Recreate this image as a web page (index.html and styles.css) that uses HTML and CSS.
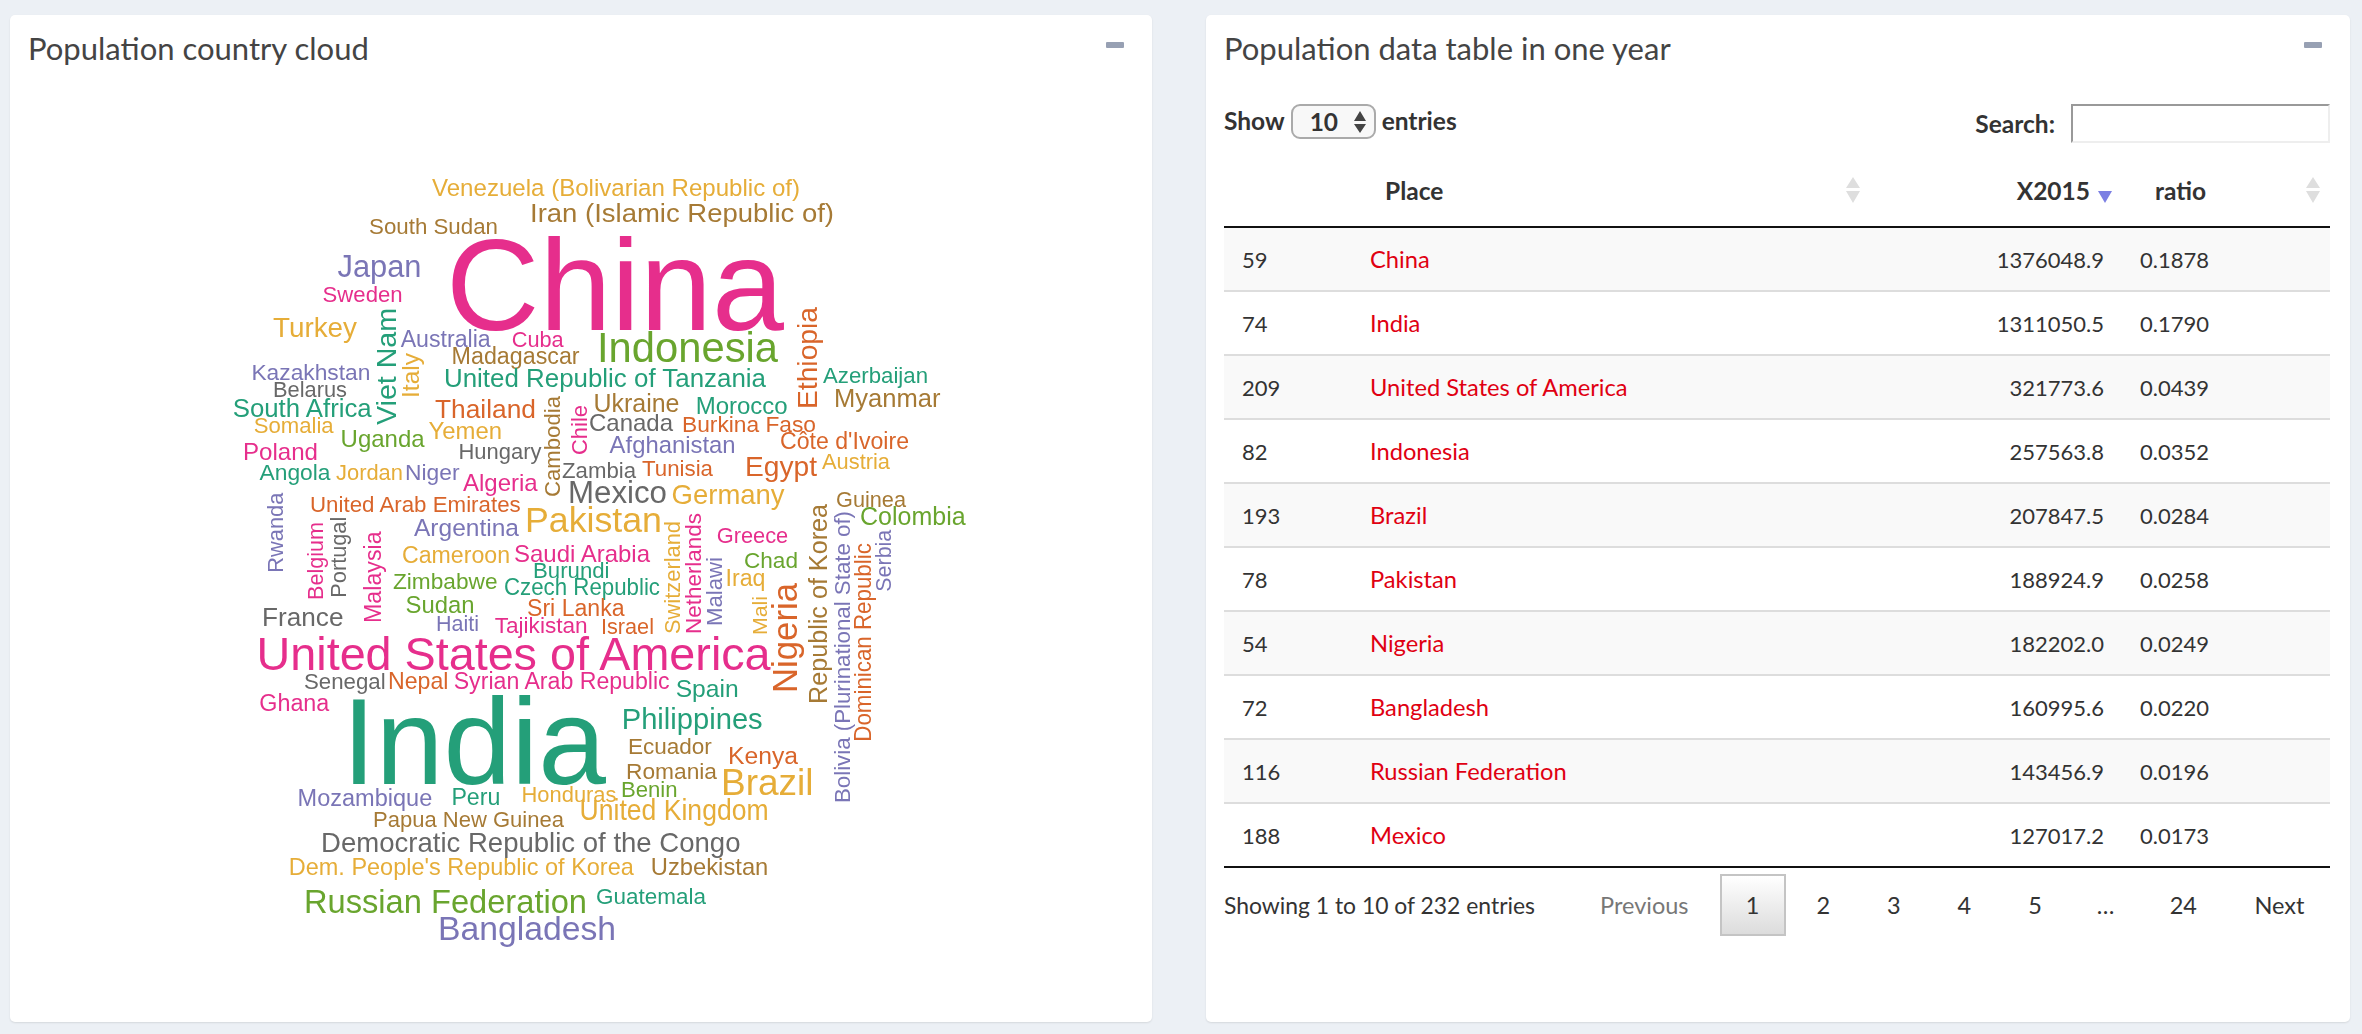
FILE: index.html
```html
<!DOCTYPE html>
<html lang="en">
<head>
  <meta charset="UTF-8">
  <title>Population dashboard</title>
  <link rel="stylesheet" href="styles.css">
</head>
<body>

  <div class="dashboard">

    <section class="box">
      <div class="box-header">
        <h3 class="box-title">Population country cloud</h3>
        <span class="collapse-btn"></span>
      </div>
      <svg class="cloud" viewBox="10 70 1142 900" width="1142" height="900">
        <text class="yellow" x="432" y="196" font-size="23.7" lengthAdjust="spacingAndGlyphs" textLength="368">Venezuela (Bolivarian Republic of)</text>
        <text class="brown" x="530" y="222" font-size="25.6" lengthAdjust="spacingAndGlyphs" textLength="304">Iran (Islamic Republic of)</text>
        <text class="brown" x="369" y="234" font-size="22.3" lengthAdjust="spacingAndGlyphs" textLength="129">South Sudan</text>
        <text class="pink" x="446" y="330" font-size="129.5" lengthAdjust="spacingAndGlyphs" textLength="338">China</text>
        <text class="purple" x="337.5" y="277" font-size="30.8" lengthAdjust="spacingAndGlyphs" textLength="84">Japan</text>
        <text class="pink" x="322.6" y="302" font-size="22" lengthAdjust="spacingAndGlyphs" textLength="80">Sweden</text>
        <text class="yellow" x="273" y="337" font-size="27.5" lengthAdjust="spacingAndGlyphs" textLength="84">Turkey</text>
        <text class="teal" transform="translate(396 425) rotate(-90)" font-size="28.4" lengthAdjust="spacingAndGlyphs" textLength="117">Viet Nam</text>
        <text class="purple" x="400.7" y="347" font-size="23.1" lengthAdjust="spacingAndGlyphs" textLength="90">Australia</text>
        <text class="pink" x="511.7" y="347" font-size="21.8" lengthAdjust="spacingAndGlyphs" textLength="52">Cuba</text>
        <text class="brown" x="451.6" y="364" font-size="23.3" lengthAdjust="spacingAndGlyphs" textLength="128">Madagascar</text>
        <text class="yellow" transform="translate(419 398) rotate(-90)" font-size="24.5" lengthAdjust="spacingAndGlyphs" textLength="45">Italy</text>
        <text class="purple" x="251.4" y="380" font-size="22.8" lengthAdjust="spacingAndGlyphs" textLength="119">Kazakhstan</text>
        <text class="gray" x="273" y="397" font-size="21.8" lengthAdjust="spacingAndGlyphs" textLength="74">Belarus</text>
        <text class="teal" x="444" y="387" font-size="25.6" lengthAdjust="spacingAndGlyphs" textLength="322">United Republic of Tanzania</text>
        <text class="teal" x="232.7" y="417" font-size="25.5" lengthAdjust="spacingAndGlyphs" textLength="139">South Africa</text>
        <text class="yellow" x="253.7" y="433" font-size="22" lengthAdjust="spacingAndGlyphs" textLength="80">Somalia</text>
        <text class="orange" x="435" y="418" font-size="26.3" lengthAdjust="spacingAndGlyphs" textLength="101">Thailand</text>
        <text class="yellow" x="428.6" y="439" font-size="23.2" lengthAdjust="spacingAndGlyphs" textLength="73.5">Yemen</text>
        <text class="lime" x="340.6" y="447" font-size="24" lengthAdjust="spacingAndGlyphs" textLength="84">Uganda</text>
        <text class="pink" x="243" y="460" font-size="24" lengthAdjust="spacingAndGlyphs" textLength="75">Poland</text>
        <text class="gray" x="458.5" y="459" font-size="22" lengthAdjust="spacingAndGlyphs" textLength="83">Hungary</text>
        <text class="brown" transform="translate(559.5 497) rotate(-90)" font-size="22" lengthAdjust="spacingAndGlyphs" textLength="101">Cambodia</text>
        <text class="pink" transform="translate(587.4 455) rotate(-90)" font-size="22" lengthAdjust="spacingAndGlyphs" textLength="50">Chile</text>
        <text class="teal" x="259.5" y="480" font-size="22.8" lengthAdjust="spacingAndGlyphs" textLength="71">Angola</text>
        <text class="yellow" x="336" y="480" font-size="22" lengthAdjust="spacingAndGlyphs" textLength="67">Jordan</text>
        <text class="purple" x="405" y="480" font-size="22.8" lengthAdjust="spacingAndGlyphs" textLength="54.5">Niger</text>
        <text class="pink" x="463" y="491" font-size="24" lengthAdjust="spacingAndGlyphs" textLength="74.7">Algeria</text>
        <text class="gray" x="562" y="478" font-size="22" lengthAdjust="spacingAndGlyphs" textLength="74">Zambia</text>
        <text class="lime" x="597" y="362" font-size="41.7" lengthAdjust="spacingAndGlyphs" textLength="181">Indonesia</text>
        <text class="orange" transform="translate(817 409) rotate(-90)" font-size="28" lengthAdjust="spacingAndGlyphs" textLength="102">Ethiopia</text>
        <text class="teal" x="823" y="383" font-size="22.2" lengthAdjust="spacingAndGlyphs" textLength="105">Azerbaijan</text>
        <text class="brown" x="834" y="407" font-size="25.6" lengthAdjust="spacingAndGlyphs" textLength="106.6">Myanmar</text>
        <text class="brown" x="593.5" y="412" font-size="25" lengthAdjust="spacingAndGlyphs" textLength="86">Ukraine</text>
        <text class="teal" x="695.7" y="414" font-size="24" lengthAdjust="spacingAndGlyphs" textLength="92">Morocco</text>
        <text class="gray" x="589" y="431" font-size="24" lengthAdjust="spacingAndGlyphs" textLength="84">Canada</text>
        <text class="orange" x="682" y="432" font-size="22.7" lengthAdjust="spacingAndGlyphs" textLength="134">Burkina Faso</text>
        <text class="purple" x="609.6" y="453" font-size="23.9" lengthAdjust="spacingAndGlyphs" textLength="126">Afghanistan</text>
        <text class="orange" x="780" y="449" font-size="23.1" lengthAdjust="spacingAndGlyphs" textLength="129">Côte d'Ivoire</text>
        <text class="orange" x="642" y="476" font-size="22" lengthAdjust="spacingAndGlyphs" textLength="71">Tunisia</text>
        <text class="orange" x="745" y="476" font-size="28" lengthAdjust="spacingAndGlyphs" textLength="72">Egypt</text>
        <text class="yellow" x="822" y="469" font-size="21.9" lengthAdjust="spacingAndGlyphs" textLength="68">Austria</text>
        <text class="gray" x="568" y="503" font-size="31" lengthAdjust="spacingAndGlyphs" textLength="99">Mexico</text>
        <text class="yellow" x="671.6" y="504" font-size="27.5" lengthAdjust="spacingAndGlyphs" textLength="113">Germany</text>
        <text class="brown" x="836" y="506.7" font-size="22" lengthAdjust="spacingAndGlyphs" textLength="70">Guinea</text>
        <text class="lime" x="860" y="525" font-size="24.9" lengthAdjust="spacingAndGlyphs" textLength="105.7">Colombia</text>
        <text class="yellow" x="525" y="532" font-size="35.7" lengthAdjust="spacingAndGlyphs" textLength="137">Pakistan</text>
        <text class="pink" x="716.7" y="543" font-size="21.8" lengthAdjust="spacingAndGlyphs" textLength="71.5">Greece</text>
        <text class="pink" x="514" y="562" font-size="23.8" lengthAdjust="spacingAndGlyphs" textLength="136">Saudi Arabia</text>
        <text class="lime" x="744" y="568" font-size="22.6" lengthAdjust="spacingAndGlyphs" textLength="54">Chad</text>
        <text class="yellow" x="725.5" y="586" font-size="23" lengthAdjust="spacingAndGlyphs" textLength="40">Iraq</text>
        <text class="brown" transform="translate(826.7 704) rotate(-90)" font-size="25" lengthAdjust="spacingAndGlyphs" textLength="200">Republic of Korea</text>
        <text class="purple" transform="translate(850 803) rotate(-90)" font-size="22" lengthAdjust="spacingAndGlyphs" textLength="292">Bolivia (Plurinational State of)</text>
        <text class="orange" transform="translate(870.7 741.7) rotate(-90)" font-size="23.6" lengthAdjust="spacingAndGlyphs" textLength="198.5">Dominican Republic</text>
        <text class="purple" transform="translate(891 591.7) rotate(-90)" font-size="21.7" lengthAdjust="spacingAndGlyphs" textLength="62">Serbia</text>
        <text class="orange" x="310" y="512" font-size="22.7" lengthAdjust="spacingAndGlyphs" textLength="210.7">United Arab Emirates</text>
        <text class="purple" transform="translate(283.4 572.7) rotate(-90)" font-size="21.7" lengthAdjust="spacingAndGlyphs" textLength="80">Rwanda</text>
        <text class="pink" transform="translate(323 600) rotate(-90)" font-size="21.7" lengthAdjust="spacingAndGlyphs" textLength="78">Belgium</text>
        <text class="gray" transform="translate(346 597.7) rotate(-90)" font-size="21.7" lengthAdjust="spacingAndGlyphs" textLength="81">Portugal</text>
        <text class="pink" transform="translate(380.6 623) rotate(-90)" font-size="23" lengthAdjust="spacingAndGlyphs" textLength="91.6">Malaysia</text>
        <text class="purple" x="414" y="536" font-size="24.5" lengthAdjust="spacingAndGlyphs" textLength="105">Argentina</text>
        <text class="yellow" x="402" y="563" font-size="23.1" lengthAdjust="spacingAndGlyphs" textLength="108">Cameroon</text>
        <text class="teal" x="533" y="578" font-size="22.2" lengthAdjust="spacingAndGlyphs" textLength="76.5">Burundi</text>
        <text class="lime" x="393" y="589" font-size="22.7" lengthAdjust="spacingAndGlyphs" textLength="104.5">Zimbabwe</text>
        <text class="teal" x="504" y="595" font-size="24" lengthAdjust="spacingAndGlyphs" textLength="156">Czech Republic</text>
        <text class="lime" x="405.5" y="612.7" font-size="23.9" lengthAdjust="spacingAndGlyphs" textLength="69">Sudan</text>
        <text class="orange" x="527" y="616" font-size="23.1" lengthAdjust="spacingAndGlyphs" textLength="97.6">Sri Lanka</text>
        <text class="yellow" transform="translate(680 634) rotate(-90)" font-size="22" lengthAdjust="spacingAndGlyphs" textLength="113">Switzerland</text>
        <text class="pink" transform="translate(700.6 634) rotate(-90)" font-size="22.5" lengthAdjust="spacingAndGlyphs" textLength="121">Netherlands</text>
        <text class="purple" transform="translate(722 626) rotate(-90)" font-size="22" lengthAdjust="spacingAndGlyphs" textLength="69">Malawi</text>
        <text class="yellow" transform="translate(767 635) rotate(-90)" font-size="21" lengthAdjust="spacingAndGlyphs" textLength="39">Mali</text>
        <text class="gray" x="262" y="625.7" font-size="26" lengthAdjust="spacingAndGlyphs" textLength="81.5">France</text>
        <text class="purple" x="436" y="630.7" font-size="21.5" lengthAdjust="spacingAndGlyphs" textLength="43">Haiti</text>
        <text class="pink" x="494.7" y="632.7" font-size="22" lengthAdjust="spacingAndGlyphs" textLength="93">Tajikistan</text>
        <text class="orange" x="601" y="634" font-size="21.7" lengthAdjust="spacingAndGlyphs" textLength="53">Israel</text>
        <text class="orange" transform="translate(797.3 693) rotate(-90)" font-size="34.5" lengthAdjust="spacingAndGlyphs" textLength="110">Nigeria</text>
        <text class="pink" x="256.6" y="670" font-size="47" lengthAdjust="spacingAndGlyphs" textLength="514">United States of America</text>
        <text class="gray" x="304" y="689" font-size="22.2" lengthAdjust="spacingAndGlyphs" textLength="81.6">Senegal</text>
        <text class="orange" x="388" y="689" font-size="23.2" lengthAdjust="spacingAndGlyphs" textLength="60.5">Nepal</text>
        <text class="pink" x="453.7" y="689" font-size="23" lengthAdjust="spacingAndGlyphs" textLength="216">Syrian Arab Republic</text>
        <text class="teal" x="675.7" y="696.7" font-size="24.6" lengthAdjust="spacingAndGlyphs" textLength="63">Spain</text>
        <text class="pink" x="259.3" y="711" font-size="23.3" lengthAdjust="spacingAndGlyphs" textLength="70">Ghana</text>
        <text class="teal" x="342" y="784" font-size="122" lengthAdjust="spacingAndGlyphs" textLength="264">India</text>
        <text class="teal" x="621.7" y="729" font-size="29" lengthAdjust="spacingAndGlyphs" textLength="141">Philippines</text>
        <text class="brown" x="627.9" y="754" font-size="22.5" lengthAdjust="spacingAndGlyphs" textLength="84">Ecuador</text>
        <text class="orange" x="728" y="764" font-size="24.7" lengthAdjust="spacingAndGlyphs" textLength="70">Kenya</text>
        <text class="brown" x="626" y="779" font-size="22.7" lengthAdjust="spacingAndGlyphs" textLength="91">Romania</text>
        <text class="yellow" x="721" y="795" font-size="37" lengthAdjust="spacingAndGlyphs" textLength="92.5">Brazil</text>
        <text class="purple" x="297.6" y="806" font-size="23.5" lengthAdjust="spacingAndGlyphs" textLength="134.7">Mozambique</text>
        <text class="teal" x="451.4" y="805" font-size="23.2" lengthAdjust="spacingAndGlyphs" textLength="49">Peru</text>
        <text class="yellow" x="521.5" y="801.7" font-size="22" lengthAdjust="spacingAndGlyphs" textLength="95">Honduras</text>
        <text class="lime" x="621" y="797" font-size="22.1" lengthAdjust="spacingAndGlyphs" textLength="56.6">Benin</text>
        <text class="yellow" x="579.6" y="820" font-size="28.6" lengthAdjust="spacingAndGlyphs" textLength="189">United Kingdom</text>
        <text class="brown" x="373" y="827" font-size="22" lengthAdjust="spacingAndGlyphs" textLength="191">Papua New Guinea</text>
        <text class="gray" x="321" y="851.7" font-size="27.6" lengthAdjust="spacingAndGlyphs" textLength="419.5">Democratic Republic of the Congo</text>
        <text class="yellow" x="288.8" y="875" font-size="23.8" lengthAdjust="spacingAndGlyphs" textLength="345">Dem. People's Republic of Korea</text>
        <text class="brown" x="650.8" y="875" font-size="23.8" lengthAdjust="spacingAndGlyphs" textLength="117.5">Uzbekistan</text>
        <text class="lime" x="304" y="913" font-size="32.6" lengthAdjust="spacingAndGlyphs" textLength="283">Russian Federation</text>
        <text class="teal" x="596" y="904" font-size="22.5" lengthAdjust="spacingAndGlyphs" textLength="110">Guatemala</text>
        <text class="purple" x="438" y="940" font-size="33.7" lengthAdjust="spacingAndGlyphs" textLength="178">Bangladesh</text>
      </svg>
    </section>

    <section class="box">
      <div class="box-header">
        <h3 class="box-title">Population data table in one year</h3>
        <span class="collapse-btn"></span>
      </div>
      <div class="table-wrap">
        <div class="table-controls">
          <div class="length-control">
            <span>Show</span>
            <span class="select-box">
              <span>10</span>
              <svg width="14" height="22" viewBox="0 0 14 22"><path d="M7 0 L13 10 L1 10 Z M1 13 L13 13 L7 22 Z" fill="#444"/></svg>
            </span>
            <span>entries</span>
          </div>
          <label class="search-control">Search:<input type="text"></label>
        </div>

        <table class="data-table">
          <colgroup>
            <col class="col-id"><col class="col-place"><col class="col-value"><col class="col-ratio">
          </colgroup>
          <thead>
            <tr>
              <th></th>
              <th class="sortable">Place
                <svg class="sort-icon" width="14" height="26" viewBox="0 0 14 26"><path d="M7 0 L14 11 L0 11 Z M0 14 L14 14 L7 26 Z" fill="#dedede"/></svg>
              </th>
              <th class="sortable num">X2015
                <svg class="sort-icon" width="14" height="26" viewBox="0 0 14 26"><path d="M0 14 L14 14 L7 26 Z" fill="#7b7fe3"/></svg>
              </th>
              <th class="sortable">ratio
                <svg class="sort-icon" width="14" height="26" viewBox="0 0 14 26"><path d="M7 0 L14 11 L0 11 Z M0 14 L14 14 L7 26 Z" fill="#dedede"/></svg>
              </th>
            </tr>
          </thead>
          <tbody>
            <tr><td>59</td><td><a href="#">China</a></td><td class="num">1376048.9</td><td>0.1878</td></tr>
            <tr><td>74</td><td><a href="#">India</a></td><td class="num">1311050.5</td><td>0.1790</td></tr>
            <tr><td>209</td><td><a href="#">United States of America</a></td><td class="num">321773.6</td><td>0.0439</td></tr>
            <tr><td>82</td><td><a href="#">Indonesia</a></td><td class="num">257563.8</td><td>0.0352</td></tr>
            <tr><td>193</td><td><a href="#">Brazil</a></td><td class="num">207847.5</td><td>0.0284</td></tr>
            <tr><td>78</td><td><a href="#">Pakistan</a></td><td class="num">188924.9</td><td>0.0258</td></tr>
            <tr><td>54</td><td><a href="#">Nigeria</a></td><td class="num">182202.0</td><td>0.0249</td></tr>
            <tr><td>72</td><td><a href="#">Bangladesh</a></td><td class="num">160995.6</td><td>0.0220</td></tr>
            <tr><td>116</td><td><a href="#">Russian Federation</a></td><td class="num">143456.9</td><td>0.0196</td></tr>
            <tr><td>188</td><td><a href="#">Mexico</a></td><td class="num">127017.2</td><td>0.0173</td></tr>
          </tbody>
        </table>

        <div class="table-footer">
          <div class="table-info">Showing 1 to 10 of 232 entries</div>
          <div class="pagination">
            <a class="page-btn disabled">Previous</a>
            <a class="page-btn single current">1</a>
            <a class="page-btn single">2</a>
            <a class="page-btn single">3</a>
            <a class="page-btn single">4</a>
            <a class="page-btn single">5</a>
            <span class="page-btn single">…</span>
            <a class="page-btn">24</a>
            <a class="page-btn">Next</a>
          </div>
        </div>
      </div>
    </section>

  </div>

</body>
</html>
```

FILE: styles.css
```css
* {
  box-sizing: border-box;
}

body {
  margin: 0;
  height: 1034px;
  overflow: hidden;
  background-color: #ecf0f5;
  font-family: 'Lato', sans-serif;
  font-size: 22px;
  color: #333;
}

.dashboard {
  display: grid;
  grid-template-columns: 1142px 1144px;
  column-gap: 54px;
  padding: 15px 12px 12px 10px;
  height: 1034px;
}

.box {
  background: #fff;
  border-radius: 5px;
  box-shadow: 0 1px 2px rgba(0,0,0,0.1);
}

.box-header {
  display: flex;
  justify-content: space-between;
  height: 55px;
  padding: 0 28px 0 18px;
}

.box-title {
  margin: 0;
  padding-top: 6px;
  font-size: 31px;
  font-weight: 400;
  line-height: 55px;
  color: #444;
}

.collapse-btn {
  width: 18px;
  height: 6px;
  margin-top: 27px;
  background: #97a0b3;
  border-radius: 1px;
}

.cloud {
  display: block;
  font-family: 'Liberation Sans', sans-serif;
  filter: blur(0.4px);
}

.yellow { fill: #e6ad38; }
.brown { fill: #a67a35; }
.pink { fill: #e62e8c; }
.purple { fill: #7a75b6; }
.teal { fill: #249f79; }
.gray { fill: #686868; }
.orange { fill: #d9652a; }
.lime { fill: #69a52e; }

.table-wrap {
  padding: 0 20px 0 18px;
}

.table-controls {
  display: flex;
  justify-content: space-between;
  height: 73px;
  padding-top: 34px;
  font-size: 24.5px;
  font-weight: 700;
}

.length-control {
  display: flex;
  align-items: flex-start;
  gap: 6px;
  line-height: 34px;
}

.select-box {
  display: flex;
  justify-content: space-between;
  align-items: center;
  width: 85px;
  height: 35px;
  padding: 0 7px 0 17px;
  border: 2px solid #aaa;
  border-radius: 9px;
  background: #f8f8f8;
}

.search-control {
  display: flex;
  align-items: flex-start;
  gap: 16px;
  line-height: 40px;
}

.search-control input {
  width: 259px;
  height: 39px;
  border: 2px solid #eee;
  border-top-color: #999;
  border-left-color: #999;
  background: #fff;
}

.data-table {
  width: 1106px;
  table-layout: fixed;
  border-collapse: separate;
  border-spacing: 0;
}

.col-id { width: 128px; }
.col-place { width: 518px; }
.col-value { width: 252px; }
.col-ratio { width: 208px; }

.data-table th {
  position: relative;
  height: 85px;
  padding: 12px 32px 0 33px;
  text-align: left;
  font-size: 24.5px;
  font-weight: 700;
  border-bottom: 2px solid #111;
}

.data-table td {
  height: 64px;
  padding: 0 18px;
  border-bottom: 2px solid #ddd;
}

.data-table tbody tr:nth-child(odd) td {
  background: #f9f9f9;
}

.data-table tbody tr:last-child td {
  border-bottom-color: #111;
}

.data-table a {
  font-size: 23.7px;
  color: #e00012;
  text-decoration: none;
}

.data-table .num {
  text-align: right;
}

.sort-icon {
  position: absolute;
  right: 10px;
  top: 34px;
}

.table-footer {
  display: flex;
  justify-content: space-between;
  align-items: flex-start;
  padding-top: 6px;
}

.table-info {
  font-size: 22.9px;
  line-height: 62px;
}

.pagination {
  display: flex;
  gap: 4.6px;
  margin-right: -1px;
  font-size: 23.5px;
}

.page-btn {
  height: 62px;
  padding: 0 24.5px;
  border: 2px solid transparent;
  text-align: center;
  line-height: 58px;
  color: #333;
}

.page-btn.single {
  width: 66px;
  padding: 0;
}

.page-btn.disabled {
  color: #777;
}

.page-btn.current {
  border-color: #c4c4c4;
  background: linear-gradient(to bottom, #fff 0%, #dcdcdc 100%);
}
```
